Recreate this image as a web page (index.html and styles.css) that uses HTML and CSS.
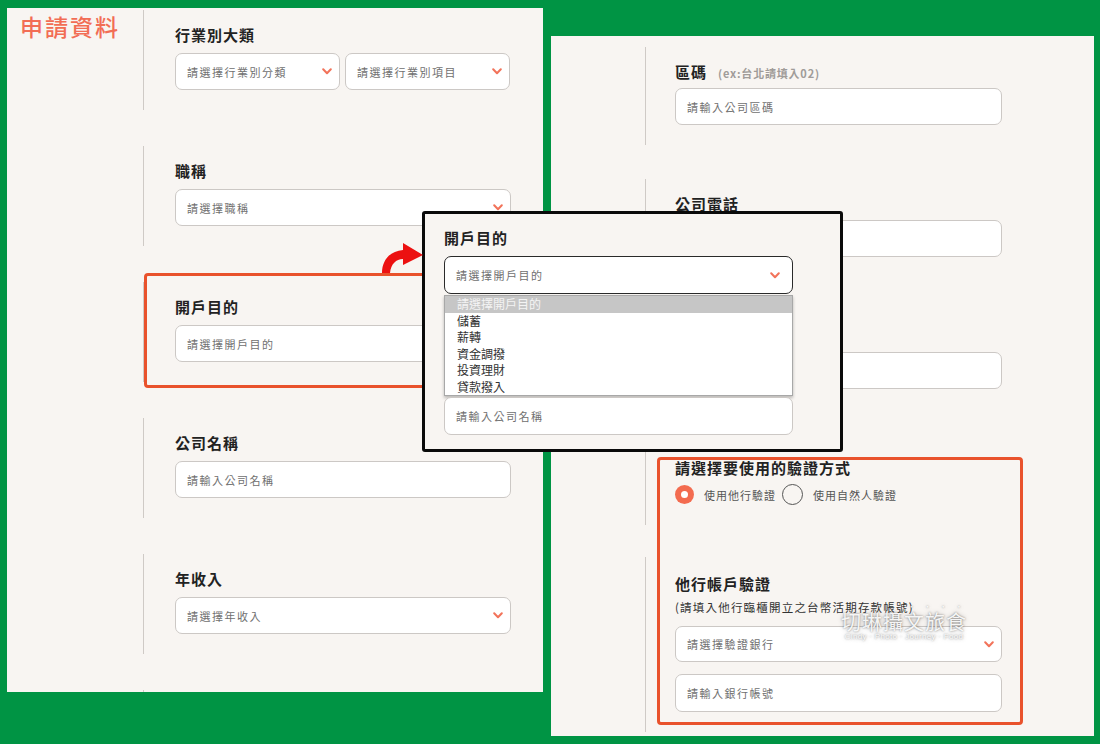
FILE: index.html
```html
<!DOCTYPE html>
<html lang="zh-Hant">
<head>
<meta charset="utf-8">
<title>申請資料</title>
<link rel="stylesheet" href="styles.css">
</head>
<body>
<div class="stage">
  <section class="panel panel-left">
    <div class="row">
      <div class="side"><h1 class="title">申請資料</h1></div>
      <div class="field">
        <div class="label">行業別大類</div>
        <div class="pair">
          <div class="control select half"><span>請選擇行業別分類</span><svg class="chev" viewBox="0 0 10 7" width="10" height="7"><path d="M1.2 1.2l3.8 4 3.8-4"/></svg></div>
          <div class="control select half"><span>請選擇行業別項目</span><svg class="chev" viewBox="0 0 10 7" width="10" height="7"><path d="M1.2 1.2l3.8 4 3.8-4"/></svg></div>
        </div>
      </div>
    </div>
    <div class="row">
      <div class="side"></div>
      <div class="field">
        <div class="label">職稱</div>
        <div class="control select"><span>請選擇職稱</span><svg class="chev" viewBox="0 0 10 7" width="10" height="7"><path d="M1.2 1.2l3.8 4 3.8-4"/></svg></div>
      </div>
    </div>
    <div class="row">
      <div class="side"></div>
      <div class="field">
        <div class="label">開戶目的</div>
        <div class="control select"><span>請選擇開戶目的</span><svg class="chev" viewBox="0 0 10 7" width="10" height="7"><path d="M1.2 1.2l3.8 4 3.8-4"/></svg></div>
      </div>
    </div>
    <div class="row">
      <div class="side"></div>
      <div class="field">
        <div class="label">公司名稱</div>
        <div class="control"><span>請輸入公司名稱</span></div>
      </div>
    </div>
    <div class="row">
      <div class="side"></div>
      <div class="field">
        <div class="label">年收入</div>
        <div class="control select"><span>請選擇年收入</span><svg class="chev" viewBox="0 0 10 7" width="10" height="7"><path d="M1.2 1.2l3.8 4 3.8-4"/></svg></div>
      </div>
    </div>
    <div class="row">
      <div class="side"></div>
      <div class="field"></div>
    </div>
    <div class="hl hl-left"></div>
  </section>

  <section class="panel panel-right">
    <div class="row">
      <div class="side"></div>
      <div class="field">
        <div class="label">區碼<span class="hint">(ex:台北請填入02)</span></div>
        <div class="control"><span>請輸入公司區碼</span></div>
      </div>
    </div>
    <div class="row">
      <div class="side"></div>
      <div class="field">
        <div class="label">公司電話</div>
        <div class="control"><span>請輸入公司電話</span></div>
      </div>
    </div>
    <div class="row">
      <div class="side"></div>
      <div class="field">
        <div class="label">公司分機</div>
        <div class="control"><span>請輸入公司分機</span></div>
      </div>
    </div>
    <div class="row row-verify">
      <div class="side"></div>
      <div class="field">
        <div class="label">請選擇要使用的驗證方式</div>
        <div class="radios">
          <span class="radio on"></span><span class="rlabel">使用他行驗證</span>
          <span class="radio off"></span><span class="rlabel">使用自然人驗證</span>
        </div>
      </div>
    </div>
    <div class="row row-bank">
      <div class="side"></div>
      <div class="field">
        <div class="label">他行帳戶驗證</div>
        <p class="note">(請填入他行臨櫃開立之台幣活期存款帳號)</p>
        <div class="control select"><span>請選擇驗證銀行</span><svg class="chev" viewBox="0 0 10 7" width="10" height="7"><path d="M1.2 1.2l3.8 4 3.8-4"/></svg></div>
        <div class="control"><span>請輸入銀行帳號</span></div>
      </div>
    </div>
    <div class="hl hl-right"></div>
  </section>

  <div class="popup">
    <div class="label">開戶目的</div>
    <div class="control select active"><span>請選擇開戶目的</span><svg class="chev" viewBox="0 0 10 7" width="10" height="7"><path d="M1.2 1.2l3.8 4 3.8-4"/></svg></div>
    <ul class="listbox">
      <li class="sel">請選擇開戶目的</li>
      <li>儲蓄</li>
      <li>薪轉</li>
      <li>資金調撥</li>
      <li>投資理財</li>
      <li>貸款撥入</li>
    </ul>
    <div class="control"><span>請輸入公司名稱</span></div>
  </div>

  <svg class="arrow" viewBox="0 0 48 42" width="48" height="42">
    <path d="M4 37 C4 24 12 15 25 14 L25 7 L45 19 L25 29 L25 23 C18 23 13 28 12 37 Z"/>
  </svg>

  <div class="watermark">
    <div class="wm-dots">· · · ·</div>
    <div class="wm-main">切琳攝文旅食</div>
    <div class="wm-sub">Cindy · Photo · Journey · Food</div>
  </div>
</div>
</body>
</html>
```

FILE: styles.css
```css
* { box-sizing: border-box; margin: 0; padding: 0; }

html, body {
  width: 1100px;
  height: 744px;
  overflow: hidden;
  background: #009444;
}

body {
  font-family: "Noto Sans CJK TC", "Noto Sans", sans-serif;
  color: #222;
}

.stage {
  position: relative;
  width: 1100px;
  height: 744px;
  display: flex;
  align-items: flex-start;
  gap: 8px;
  padding: 8px 0 0 7px;
  background: #009444;
}

.panel {
  position: relative;
  flex: none;
  display: flex;
  flex-direction: column;
  background: #f8f5f2;
  overflow: hidden;
}

.panel-left {
  width: 536px;
  height: 684px;
  padding-top: 2px;
  gap: 36px;
}

.panel-right {
  width: 543px;
  height: 700px;
  margin-top: 28px;
  padding-top: 11px;
}

.row {
  display: grid;
  flex: none;
}

.panel-left .row {
  grid-template-columns: 136px 1fr;
  height: 100px;
}

.panel-right .row {
  grid-template-columns: 94px 1fr;
  height: 98px;
  margin-bottom: 34px;
}

.panel-right .row-verify {
  height: 82px;
  margin-bottom: 32px;
}

.panel-right .row-bank {
  height: 175px;
  margin-bottom: 0;
}

.field {
  border-left: 1px solid #cfcac6;
  padding-left: 31px;
}

.panel-right .field {
  padding-left: 29px;
}

.title {
  font-size: 23px;
  font-weight: 500;
  line-height: 28px;
  letter-spacing: 2px;
  color: #f26d55;
  padding-left: 13px;
  margin-top: 2px;
}

.label {
  display: flex;
  align-items: baseline;
  height: 20px;
  font-size: 15px;
  font-weight: 700;
  line-height: 20px;
  letter-spacing: 1px;
  color: #222;
  margin-top: 15px;
}

.panel-right .label {
  margin-top: 15px;
}

.panel-right .row-bank .label {
  margin-top: 17px;
}

.hint {
  font-size: 11px;
  font-weight: 700;
  line-height: 14px;
  letter-spacing: 0.8px;
  color: #a09c99;
  margin-left: 11px;
}

.control {
  display: flex;
  align-items: center;
  justify-content: space-between;
  width: 336px;
  height: 37px;
  margin-top: 8px;
  padding: 0 7px 0 11px;
  background: #fff;
  border: 1px solid #ccc8c5;
  border-radius: 7px;
  font-size: 11px;
  letter-spacing: 1.5px;
  color: #707070;
  white-space: nowrap;
}

.panel-right .control {
  width: 327px;
  margin-top: 6px;
}

.pair {
  display: flex;
  gap: 5px;
  width: 336px;
}

.control.half {
  width: 165px;
}

.chev {
  flex: none;
}

.chev path {
  fill: none;
  stroke: #f2735a;
  stroke-width: 2;
  stroke-linecap: round;
  stroke-linejoin: round;
}

.radios {
  display: flex;
  align-items: center;
  height: 21px;
  margin-top: 6px;
  font-size: 11px;
  letter-spacing: 1px;
  color: #555;
}

.radio {
  flex: none;
  border-radius: 50%;
}

.radio.on {
  width: 19px;
  height: 19px;
  background: #f36b4f;
  display: flex;
  align-items: center;
  justify-content: center;
}

.radio.on::after {
  content: "";
  width: 7px;
  height: 7px;
  border-radius: 50%;
  background: #fff;
}

.radio.off {
  width: 21px;
  height: 21px;
  border: 1.5px solid #555;
  margin-left: 6px;
}

.rlabel {
  margin-left: 10px;
}

.note {
  width: fit-content;
  font-size: 11.5px;
  line-height: 16px;
  letter-spacing: 1.2px;
  color: #333;
  margin-top: 5px;
  white-space: nowrap;
}

.panel-right .row-bank .select {
  height: 36px;
  margin-top: 11px;
}

.panel-right .row-bank .select + .control {
  height: 38px;
  margin-top: 12px;
}

/* highlight annotations */
.hl {
  position: absolute;
  border: 3px solid #e9522c;
  border-radius: 4px;
  pointer-events: none;
}

.hl-left {
  left: 137px;
  top: 265px;
  width: 392px;
  height: 115px;
}

.hl-right {
  left: 106px;
  top: 421px;
  width: 366px;
  height: 268px;
}

/* zoomed popup */
.popup {
  position: absolute;
  left: 422px;
  top: 211px;
  width: 421px;
  height: 241px;
  padding: 14px 0 0 19px;
  background: #f8f5f2;
  border: 3px solid #0a0a0a;
  border-radius: 3px;
  z-index: 5;
}

.popup .label {
  margin-top: 0;
}

.popup .control {
  width: 349px;
  height: 38px;
  padding-right: 12px;
}

.popup .control.active {
  border: 1.5px solid #2a2a2a;
  margin-top: 8px;
}

.listbox {
  width: 349px;
  margin-top: 1px;
  background: #fff;
  border: 1px solid #a8a8a8;
  box-shadow: 0 2px 3px rgba(0, 0, 0, 0.25);
  font-size: 12px;
  color: #333;
  list-style: none;
}

.listbox li {
  height: 16.5px;
  line-height: 16.5px;
  padding-left: 12px;
}

.listbox li.sel {
  background: #c6c6c6;
  color: #f4f4f4;
}

.popup .listbox + .control {
  margin-top: 1px;
}

.arrow {
  position: absolute;
  left: 378px;
  top: 236px;
  z-index: 6;
}

.arrow path {
  fill: #ec1111;
}

.watermark {
  position: absolute;
  left: 836px;
  top: 603px;
  width: 136px;
  text-align: center;
  color: rgba(255, 255, 255, 0.92);
  text-shadow: 0 0 2px rgba(0, 0, 0, 0.45), 0 0 5px rgba(0, 0, 0, 0.25);
  z-index: 4;
}

.wm-dots {
  width: fit-content;
  margin-left: auto;
  font-size: 8px;
  line-height: 8px;
  letter-spacing: 3px;
  padding-right: 6px;
}

.wm-main {
  font-size: 20px;
  line-height: 20px;
  letter-spacing: 1px;
  margin-top: 1px;
}

.wm-sub {
  font-family: "Liberation Sans", sans-serif;
  font-size: 8px;
  line-height: 10px;
  letter-spacing: 0.3px;
}
```
